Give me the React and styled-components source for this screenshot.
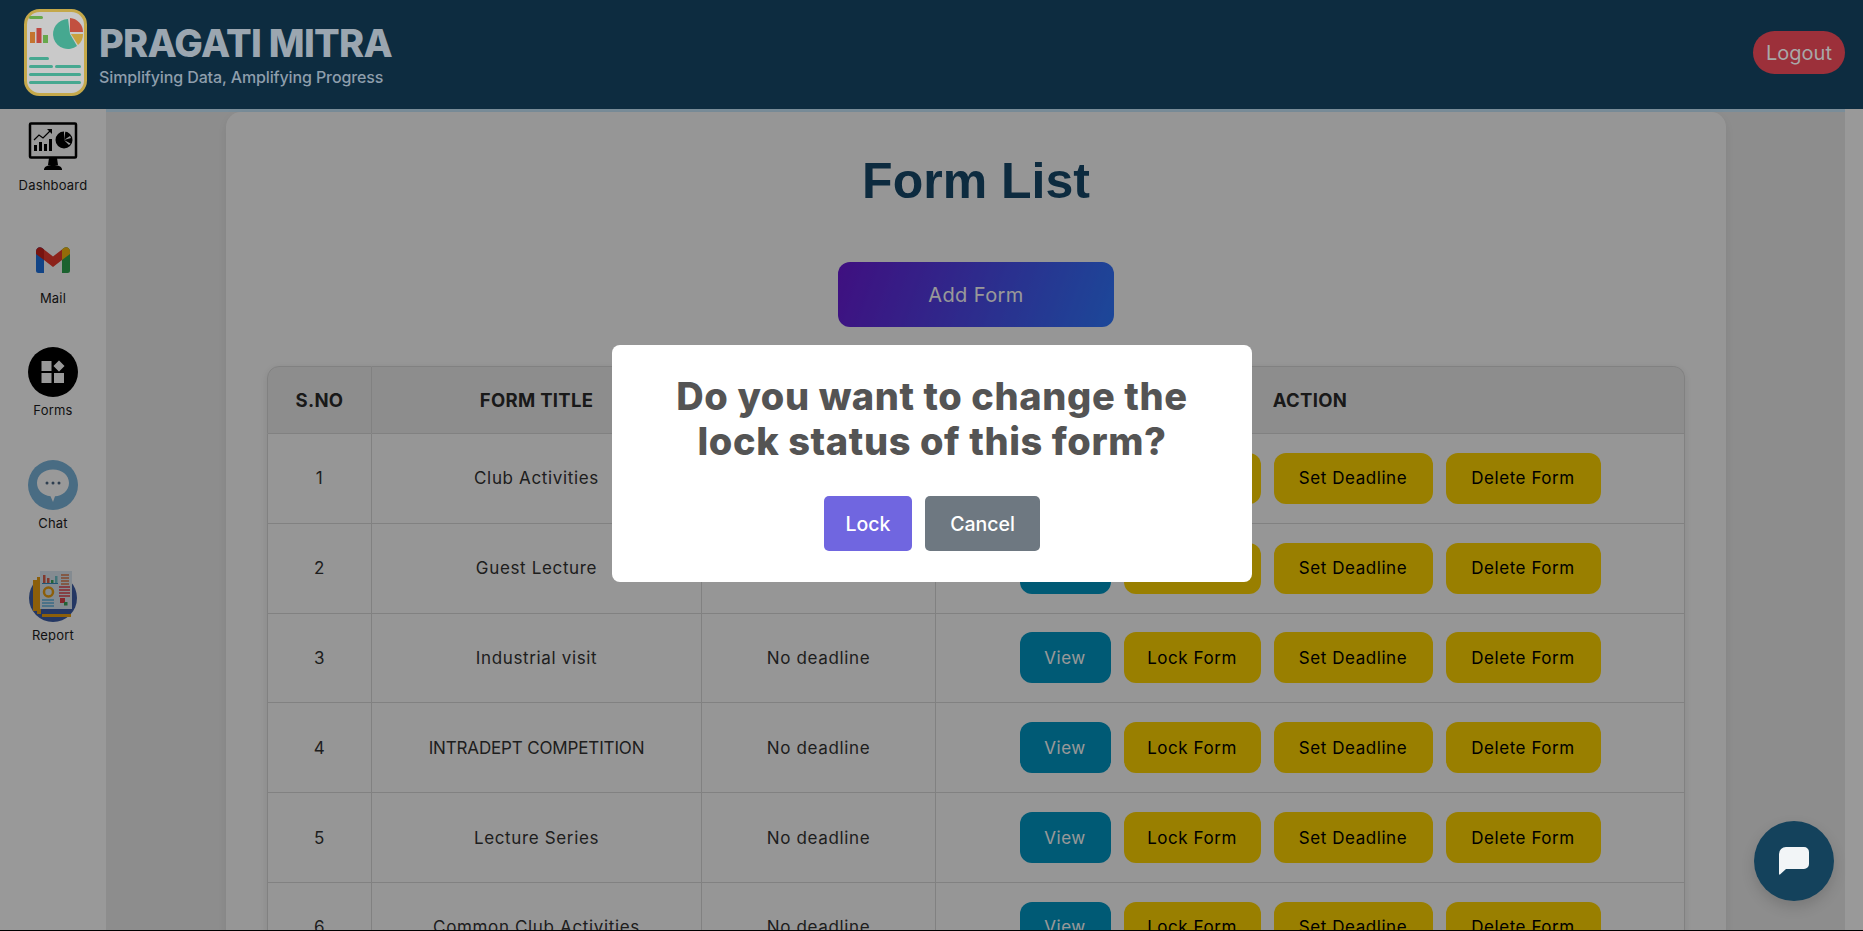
import React from "react";
import styled, { createGlobalStyle } from "styled-components";

const Global = createGlobalStyle`
  html, body { margin: 0; padding: 0; height: 100%; overflow: hidden; background: #fff; }
  * { box-sizing: border-box; }
  body { font-family: "Inter", "Noto Sans", sans-serif; }
`;

const Page = styled.div`
  height: 931px;
  display: flex;
  flex-direction: column;
  overflow: hidden;
`;

const Header = styled.header`
  position: relative;
  z-index: 20;
  flex: none;
  height: 109px;
  background: #0d2c40;
  display: flex;
  align-items: center;
  padding: 0 18px 0 24px;
`;

const Brand = styled.div`
  display: flex;
  align-items: center;
  gap: 12px;
  flex: 1;
`;

const LogoBox = styled.div`
  display: flex;
  margin-top: -4px;
`;

const BrandText = styled.div`
  display: flex;
  flex-direction: column;
`;

const BrandName = styled.div`
  font-size: 38px;
  line-height: 44px;
  font-weight: 800;
  color: #9ba6b0;
  letter-spacing: -0.7px;
`;

const BrandTag = styled.div`
  margin-top: 1px;
  font-size: 16px;
  line-height: 22px;
  font-weight: 500;
  letter-spacing: -0.12px;
  color: #8e9eac;
`;

const Logout = styled.button`
  width: 92px;
  height: 43px;
  margin-bottom: 4px;
  border: 0;
  border-radius: 22px;
  background: #9c303a;
  color: #a8a8a8;
  font: 400 20px "Inter", sans-serif;
  padding: 0;
`;

const Body = styled.div`
  flex: 1;
  min-height: 0;
  display: flex;
`;

const Sidebar = styled.nav`
  flex: none;
  width: 106px;
  background: #fff;
  display: flex;
  flex-direction: column;
`;

const NavItem = styled.div`
  height: 112.5px;
  padding-top: 13px;
  display: flex;
  flex-direction: column;
  align-items: center;
`;

const NavIcon = styled.div`
  width: 50px;
  height: 50px;
  display: flex;
  align-items: center;
  justify-content: center;
`;

const NavLabel = styled.div`
  margin-top: 3px;
  font-size: 13px;
  line-height: 20px;
  letter-spacing: 0.2px;
  color: #1c1c1c;
`;

const Main = styled.main`
  flex: 1;
  min-width: 0;
  background: #ececec;
  border-top: 3px solid #cbebff;
  padding-left: 1px;
  display: flex;
  justify-content: center;
  align-items: flex-start;
`;

const ScrollTrack = styled.div`
  flex: none;
  width: 18px;
  background: #fff;
`;

const Panel = styled.section`
  width: 1500px;
  background: #fbfbfb;
  border-radius: 15px;
  box-shadow: 0 4px 12px rgba(0, 0, 0, 0.08);
  padding: 39px 41px 0;
  display: flex;
  flex-direction: column;
  align-items: center;
`;

const Title = styled.h1`
  margin: 0;
  font: 700 50px/60px "Liberation Sans", Arial, sans-serif;
  color: #16486a;
`;

const AddButton = styled.button`
  margin-top: 51px;
  width: 276px;
  height: 65px;
  border: 0;
  border-radius: 12px;
  background: linear-gradient(110deg, #6a1ad6, #2f78ff);
  color: #fff;
  font: 400 20px "Inter", sans-serif;
  letter-spacing: 0.4px;
`;

const TableWrap = styled.div`
  margin-top: 39px;
  width: 1418px;
  border-radius: 12px 12px 0 0;
  box-shadow: 0 2px 8px rgba(0, 0, 0, 0.1);
`;

const Table = styled.table`
  width: 1418px;
  table-layout: fixed;
  border-collapse: separate;
  border-spacing: 0;
`;

const Th = styled.th`
  height: 68px;
  padding: 0;
  background: #ececec;
  color: #2b2b2b;
  font-size: 18.5px;
  font-weight: 700;
  letter-spacing: 0.3px;
  text-align: center;
  border-top: 1px solid #d8d8d8;
  border-bottom: 1px solid #d8d8d8;
  border-right: 1px solid #d8d8d8;
  &:first-child { border-left: 1px solid #d8d8d8; border-top-left-radius: 12px; }
  &:last-child { border-top-right-radius: 12px; }
`;

const Td = styled.td`
  height: 89.8px;
  padding: 0;
  text-align: center;
  color: #333;
  font-size: 17px;
  letter-spacing: ${(p) => (p.$caps ? "-0.15px" : "0.65px")};
  border-bottom: 1px solid #d8d8d8;
  border-right: 1px solid #d8d8d8;
  &:first-child { border-left: 1px solid #d8d8d8; }
`;

const Actions = styled.div`
  display: flex;
  justify-content: center;
  gap: 13px;
`;

const ActionButton = styled.button`
  width: ${(p) => p.$w}px;
  height: 51px;
  border: 0;
  border-radius: 12px;
  padding: 0;
  background: ${(p) => (p.$primary ? "#0096c3" : "#ffd400")};
  color: ${(p) => (p.$primary ? "#fff" : "#000")};
  font: 400 17px "Inter", sans-serif;
  letter-spacing: 0.55px;
`;

const Overlay = styled.div`
  position: fixed;
  inset: 0;
  z-index: 10;
  background: rgba(0, 0, 0, 0.4);
`;

const ModalLayer = styled.div`
  position: fixed;
  left: 612px;
  top: 345px;
  z-index: 30;
`;

const Modal = styled.div`
  width: 640px;
  height: 237px;
  background: #fff;
  border-radius: 8px;
  padding: 29px 0 0;
  display: flex;
  flex-direction: column;
  align-items: center;
`;

const ModalTitle = styled.h2`
  margin: 0;
  width: 560px;
  font-size: 38px;
  line-height: 45px;
  font-weight: 800;
  color: #545454;
  text-align: center;
  letter-spacing: 0.6px;
`;

const ModalActions = styled.div`
  margin-top: 32px;
  display: flex;
  gap: 13px;
`;

const ModalButton = styled.button`
  height: 55px;
  width: ${(p) => p.$w}px;
  border: 0;
  border-radius: 5px;
  padding: 0;
  background: ${(p) => p.$bg};
  color: #fff;
  font: 500 19.5px "Inter", sans-serif;
`;

const ChatFab = styled.button`
  position: fixed;
  right: 29px;
  bottom: 30px;
  z-index: 40;
  width: 80px;
  height: 80px;
  border: 0;
  border-radius: 50%;
  background: #14425c;
  box-shadow: 0 6px 14px rgba(0, 0, 0, 0.15);
  display: flex;
  align-items: center;
  justify-content: center;
  padding: 0;
`;

const BottomEdge = styled.div`
  position: fixed;
  left: 0;
  right: 0;
  bottom: 0;
  height: 1px;
  z-index: 50;
  background: #000;
`;

const LogoMark = () => (
  <svg width="63" height="87" viewBox="0 0 63 87">
    <rect x="1.500" y="1.500" width="60" height="84" rx="14" fill="#c9c9c9" stroke="#c4a84a" strokeWidth="3" />
    <rect x="5" y="7" width="14" height="3" rx="1.500" fill="#67a84c" />
    <rect x="6" y="23" width="5" height="11" fill="#c4742f" />
    <rect x="12.500" y="19" width="5" height="15" fill="#bd4741" />
    <rect x="19" y="26" width="5" height="8" fill="#67a84c" />
    <path d="M44 10 A15 15 0 1 0 53 37 L46 25 Z" fill="#46a890" />
    <path d="M46 9 A14 14 0 0 1 59 23 L46 23 Z" fill="#c2503f" />
    <path d="M47 25 L59 25 A14 14 0 0 1 54 36 Z" fill="#c9a23f" />
    <rect x="5" y="48" width="20" height="3" rx="1.500" fill="#46a890" />
    <rect x="5" y="56" width="24" height="3" rx="1.500" fill="#46a890" />
    <rect x="31" y="56" width="26" height="3" rx="1.500" fill="#46a890" />
    <rect x="5" y="64" width="52" height="3" rx="1.500" fill="#46a890" />
    <rect x="5" y="72" width="52" height="3" rx="1.500" fill="#46a890" />
  </svg>
);

const DashboardIcon = () => (
  <svg width="50" height="50" viewBox="0 0 50 50">
    <rect x="2" y="1.500" width="46" height="34" rx="1" fill="#fff" stroke="#000" strokeWidth="2.500" />
    <path d="M21 36h8l1 7h-10zM16 47c1-3 4-4 9-4s8 1 9 4v1H16z" fill="#000" />
    <rect x="6" y="23" width="3" height="6" fill="#000" />
    <rect x="11" y="20" width="3" height="9" fill="#000" />
    <rect x="16" y="22" width="3" height="7" fill="#000" />
    <rect x="21" y="17" width="3" height="12" fill="#000" />
    <path d="M6 18l5-5 4 3 7-7" fill="none" stroke="#000" strokeWidth="1.200" />
    <path d="M19 7h5v5z" fill="#000" />
    <circle cx="36" cy="18" r="8.500" fill="#000" />
    <path d="M36 18V8.500h1.500zM36 18l6-4 1 2zM36 18l5 5 1.500-1.500z" fill="#fff" />
  </svg>
);

const MailIcon = () => (
  <svg width="34" height="26" viewBox="0 0 34 26">
    <path d="M0 4.500C0 .8 3.600-1 6.500 1.200L8 2.500V26H2.500A2.500 2.500 0 0 1 0 23.500z" fill="#1f72e0" />
    <path d="M34 4.500C34 .8 30.400-1 27.500 1.200L26 2.500V26h5.500a2.500 2.500 0 0 0 2.500-2.500z" fill="#2ea44f" />
    <path d="M26 2.500l1.500-1.300C30.400-1 34 .8 34 4.500V7l-8 6z" fill="#f5b50f" />
    <path d="M8 2.500L17 9.500 26 2.500V13L17 20 8 13z" fill="#ea3b2e" />
    <path d="M0 4.500C0 .8 3.600-1 6.500 1.200L8 2.500V13L0 7z" fill="#c8221a" />
  </svg>
);

const FormsIcon = () => (
  <svg width="50" height="50" viewBox="0 0 50 50">
    <circle cx="25" cy="25" r="25" fill="#000" />
    <rect x="13.500" y="14" width="10" height="10" fill="#fff" />
    <rect x="13.500" y="26" width="10" height="10" fill="#fff" />
    <rect x="26" y="26" width="10" height="10" fill="#fff" />
    <rect x="27" y="15" width="8" height="8" rx="0.500" fill="#fff" transform="rotate(45 31 19)" />
  </svg>
);

const ChatIcon = () => (
  <svg width="50" height="50" viewBox="0 0 50 50">
    <circle cx="25" cy="25" r="25" fill="#7ab4da" />
    <path d="M25 9.500c9 0 16 5.700 16 13.500s-7 13-14 13.300L25 42l-2.500-5.800C14.500 35.500 9 30 9 23 9 15.200 16 9.500 25 9.500z" fill="#fff" />
    <circle cx="19" cy="23" r="1.500" fill="#4f6a86" />
    <circle cx="25" cy="23" r="1.500" fill="#4f6a86" />
    <circle cx="31" cy="23" r="1.500" fill="#4f6a86" />
  </svg>
);

const ReportIcon = () => (
  <svg width="50" height="52" viewBox="0 0 50 52">
    <circle cx="25" cy="27" r="24" fill="#3c5da6" />
    <path d="M5 9h4v-3h4v37l30 0v3H14v-3H9v-3H5z" fill="#e99e12" />
    <rect x="12" y="0" width="32" height="38" fill="#dce8f2" />
    <rect x="15" y="4" width="2.500" height="8" fill="#d9604c" />
    <rect x="19" y="7" width="2.500" height="5" fill="#d9604c" />
    <rect x="23" y="9" width="2.500" height="3" fill="#3aa55a" />
    <rect x="27" y="5" width="2.500" height="7" fill="#6fc2c9" />
    <rect x="14" y="12" width="16" height="1" fill="#3a8fc0" />
    <path d="M33 4h8M33 7h8M33 10h8M33 13h8" stroke="#d9784a" strokeWidth="1.500" />
    <circle cx="20.500" cy="21" r="4.500" fill="none" stroke="#e99e12" strokeWidth="2.500" />
    <path d="M31 16h11M31 19h11M31 22h11M31 25h11" stroke="#e0404a" strokeWidth="1.500" />
    <path d="M14 29h12M14 32h12M14 35h12" stroke="#5fb0de" strokeWidth="1.500" />
    <rect x="32" y="27" width="5" height="5" fill="#e0404a" />
    <rect x="36" y="31" width="3.500" height="3.500" fill="#3aa55a" />
  </svg>
);

const BubbleIcon = () => (
  <svg width="30" height="28" viewBox="0 0 30 28" style={{ display: "block" }}>
    <path d="M7 0h18a5 5 0 0 1 5 5v12a5 5 0 0 1-5 5H7l-6 5.500a.6.6 0 0 1-1-.4V7a7 7 0 0 1 7-7z" fill="#f2f5f7" />
  </svg>
);

const navItems = [
  { label: "Dashboard", icon: <DashboardIcon /> },
  { label: "Mail", icon: <MailIcon /> },
  { label: "Forms", icon: <FormsIcon /> },
  { label: "Chat", icon: <ChatIcon /> },
  { label: "Report", icon: <ReportIcon /> },
];

const rows = [
  "Club Activities",
  "Guest Lecture",
  "Industrial visit",
  "INTRADEPT COMPETITION",
  "Lecture Series",
  "Common Club Activities",
];

export default function App() {
  return (
    <Page>
      <Global />
      <Header>
        <Brand>
          <LogoBox>
            <LogoMark />
          </LogoBox>
          <BrandText>
            <BrandName>PRAGATI MITRA</BrandName>
            <BrandTag>Simplifying Data, Amplifying Progress</BrandTag>
          </BrandText>
        </Brand>
        <Logout>Logout</Logout>
      </Header>
      <Body>
        <Sidebar>
          {navItems.map((n) => (
            <NavItem key={n.label}>
              <NavIcon>{n.icon}</NavIcon>
              <NavLabel>{n.label}</NavLabel>
            </NavItem>
          ))}
        </Sidebar>
        <Main>
          <Panel>
            <Title>Form List</Title>
            <AddButton>Add Form</AddButton>
            <TableWrap>
              <Table>
                <colgroup>
                  <col width="105" />
                  <col width="330" />
                  <col width="234" />
                  <col width="749" />
                </colgroup>
                <thead>
                  <tr>
                    <Th>S.NO</Th>
                    <Th>FORM TITLE</Th>
                    <Th>DEADLINE</Th>
                    <Th>ACTION</Th>
                  </tr>
                </thead>
                <tbody>
                  {rows.map((r, i) => (
                    <tr key={r}>
                      <Td>{i + 1}</Td>
                      <Td $caps={r === r.toUpperCase()}>{r}</Td>
                      <Td>No deadline</Td>
                      <Td>
                        <Actions>
                          <ActionButton $primary $w={91}>View</ActionButton>
                          <ActionButton $w={137}>Lock Form</ActionButton>
                          <ActionButton $w={159}>Set Deadline</ActionButton>
                          <ActionButton $w={155}>Delete Form</ActionButton>
                        </Actions>
                      </Td>
                    </tr>
                  ))}
                </tbody>
              </Table>
            </TableWrap>
          </Panel>
        </Main>
        <ScrollTrack />
      </Body>
      <Overlay />
      <ModalLayer>
        <Modal>
          <ModalTitle>Do you want to change the lock status of this form?</ModalTitle>
          <ModalActions>
            <ModalButton $w={88} $bg="#7066e0">Lock</ModalButton>
            <ModalButton $w={115} $bg="#6e7881">Cancel</ModalButton>
          </ModalActions>
        </Modal>
      </ModalLayer>
      <ChatFab aria-label="Open chat">
        <BubbleIcon />
      </ChatFab>
      <BottomEdge />
    </Page>
  );
}
